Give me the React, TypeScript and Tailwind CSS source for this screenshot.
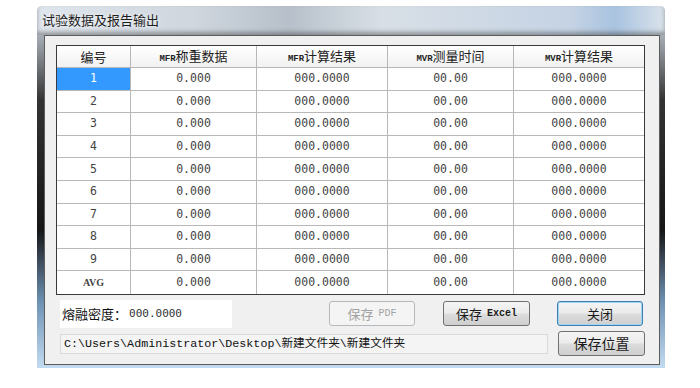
import React from 'react';

const rows = ['1', '2', '3', '4', '5', '6', '7', '8', '9', 'AVG'];

const headers: { latin?: string; cn: string }[] = [
  { cn: '编号' },
  { latin: 'MFR', cn: '称重数据' },
  { latin: 'MFR', cn: '计算结果' },
  { latin: 'MVR', cn: '测量时间' },
  { latin: 'MVR', cn: '计算结果' },
];

const btn =
  'flex items-center justify-center h-[25px] rounded-[3px] border text-[13px] text-[#1a1a1a] bg-[linear-gradient(to_bottom,#f4f4f4_0%,#ebebeb_48%,#dcdcdc_52%,#cfcfcf_100%)]';

const HeaderCell: React.FC<{ latin?: string; cn: string; last: boolean }> = ({ latin, cn, last }) => (
  <div
    className={`flex items-center justify-center h-[22px] border-b border-[#b8b8b8] bg-[linear-gradient(to_bottom,#ffffff,#f1f1f1)] ${
      last ? '' : 'border-r'
    }`}
  >
    <span className="text-[13px] text-[#222] font-['Noto_Sans_CJK_SC',sans-serif]">
      {latin && <span className="text-[9px] font-bold font-['Liberation_Mono',monospace]">{latin}</span>}
      {cn}
    </span>
  </div>
);

const Cell: React.FC<{ children: React.ReactNode; last: boolean; bottom: boolean; selected?: boolean }> = ({
  children,
  last,
  bottom,
  selected,
}) => (
  <div
    className={`flex items-center justify-center h-[22.6px] border-[#b8b8b8] text-[11.5px] font-['DejaVu_Sans_Mono',monospace] ${
      last ? '' : 'border-r'
    } ${bottom ? '' : 'border-b'} ${selected ? 'bg-[#3399ff] text-white' : 'bg-white text-[#444]'}`}
  >
    {children}
  </div>
);

export default function App() {
  return (
    <div className="w-[700px] h-[388px] bg-white pt-[6px] pl-[37px]">
      {/* window frame */}
      <div className="w-[628px] h-[362px] flex flex-col rounded-t-[5px] bg-[linear-gradient(to_bottom,#d6dee7_0%,#8f959b_12%,#333333_26%,#161616_62%,#6f93b6_82%,#c3dbf0_100%)]">
        {/* title bar */}
        <div className="h-[29px] flex items-start rounded-t-[5px] bg-[linear-gradient(to_right,#dfe5ec_0%,#cfd6de_25%,#b7c0ca_40%,#d8dfe6_55%,#c5d3e4_85%,#a9c3e0_92%,#d9e2ea_100%)] shadow-[inset_0_-3px_4px_rgba(60,60,60,0.45)]">
          <span className="ml-[5px] mt-[4px] text-[13px] text-[#1e1e1e] [text-shadow:0_0_4px_#ffffff] font-['Noto_Sans_CJK_SC',sans-serif]">
            试验数据及报告输出
          </span>
        </div>

        {/* client area */}
        <div className="ml-[7px] mr-[5px] h-[330px] bg-[#f0f0f0] border border-[#5c5c5c] pt-[9px] pl-[11px]">
          {/* table */}
          <div className="w-[589px] border border-[#3a3a3a] grid grid-cols-[74px_126px_131px_126px_130px] bg-white">
            {headers.map((h, i) => (
              <HeaderCell key={i} latin={h.latin} cn={h.cn} last={i === 4} />
            ))}
            {rows.map((r, ri) => {
              const bottom = ri === rows.length - 1;
              return (
                <React.Fragment key={r}>
                  <Cell last={false} bottom={bottom} selected={ri === 0}>
                    {r === 'AVG' ? (
                      <span className="text-[10px] font-bold font-['Liberation_Serif',serif]">AVG</span>
                    ) : (
                      r
                    )}
                  </Cell>
                  <Cell last={false} bottom={bottom}>0.000</Cell>
                  <Cell last={false} bottom={bottom}>000.0000</Cell>
                  <Cell last={false} bottom={bottom}>00.00</Cell>
                  <Cell last={true} bottom={bottom}>000.0000</Cell>
                </React.Fragment>
              );
            })}
          </div>

          {/* bottom row 1 */}
          <div className="mt-[5px] flex items-center">
            <div className="ml-[4px] w-[172px] h-[28px] bg-white flex items-center">
              <span className="ml-[2px] text-[13px] text-[#111] font-['Noto_Sans_CJK_SC',sans-serif]">熔融密度：</span>
              <span className="ml-[2px] text-[11px] text-[#333] font-['DejaVu_Sans_Mono',monospace]">000.0000</span>
            </div>
            <button
              disabled
              className="ml-[97px] w-[86px] h-[25px] flex items-center justify-center rounded-[3px] border border-[#b5b9bc] bg-[#f4f4f4] text-[13px] text-[#a3a3a3]"
            >
              <span className="font-['Noto_Sans_CJK_SC',sans-serif]">保存</span>
              <span className="ml-[5px] text-[10px] font-['Liberation_Mono',monospace]">PDF</span>
            </button>
            <button className={`ml-[28px] w-[87px] border-[#707070] ${btn}`}>
              <span className="font-['Noto_Sans_CJK_SC',sans-serif]">保存</span>
              <span className="ml-[5px] text-[10px] font-bold font-['Liberation_Mono',monospace]">Excel</span>
            </button>
            <button
              className={`ml-[27px] w-[86px] border-[#3c7fb1] shadow-[inset_0_0_0_1px_#9fd5f2] font-['Noto_Sans_CJK_SC',sans-serif] ${btn}`}
            >
              关闭
            </button>
          </div>

          {/* bottom row 2 */}
          <div className="mt-[3px] flex items-center">
            <div className="ml-[4px] mt-[2px] w-[488px] h-[20px] bg-[#f4f4f4] border border-[#dadada] flex items-center">
              <span className="ml-[3px] text-[11.7px] text-[#111] whitespace-nowrap font-['Liberation_Mono','Noto_Sans_CJK_SC',monospace]">
                C:\Users\Administrator\Desktop\新建文件夹\新建文件夹
              </span>
            </div>
            <button
              className={`ml-[10px] w-[87px] border-[#707070] text-[14px] font-['Noto_Sans_CJK_SC',sans-serif] ${btn}`}
            >
              保存位置
            </button>
          </div>
        </div>
      </div>
    </div>
  );
}
